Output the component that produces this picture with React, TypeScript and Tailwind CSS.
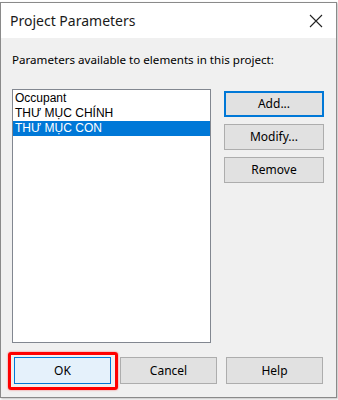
export default function App() {
  const items = ["Occupant", "THƯ MỤC CHÍNH", "THƯ MỤC CON"];
  const selected = 2;

  return (
    <div className="w-[338px] h-[400px] bg-white pt-[2px]" style={{ fontFamily: '"Noto Sans", "Open Sans", sans-serif' }}>
      <div className="w-[337px] h-[396px] border border-[#8a8a8a] flex flex-col bg-[#f0f0f0] shadow-[1px_1px_2px_rgba(0,0,0,0.25)]">
        {/* title bar */}
        <div className="h-[35px] bg-white flex items-center justify-between pl-[9px] pr-[13px]">
          <span className="text-[14px] text-[#1a1a1a] leading-none">Project Parameters</span>
          <svg width="14" height="14" viewBox="0 0 14 14" className="text-[#222]">
            <path d="M1 1 L13 13 M13 1 L1 13" stroke="currentColor" strokeWidth="1.1" fill="none" />
          </svg>
        </div>

        <div className="flex-1 px-[11px] text-[12px] text-black">
          <div className="pt-[14px] leading-[16px] text-[11.6px]">Parameters available to elements in this project:</div>

          <div className="flex mt-[21px]">
            <div
              className="w-[199px] h-[254px] bg-white border border-[#828790] pt-[1px]"
              style={{ fontFamily: '"Liberation Sans", Arial, sans-serif' }}
            >
              {items.map((it, i) => (
                <div
                  key={it}
                  className={
                    i === selected
                      ? "h-[15px] leading-[15px] pl-[2px] bg-[#0078d7] text-white"
                      : "h-[15px] leading-[15px] pl-[2px] text-black"
                  }
                >
                  {it}
                </div>
              ))}
            </div>

            <div className="ml-[13px] pt-[2px] w-[100px] flex flex-col gap-[7px]">
              <button className="h-[26px] bg-[#e1e1e1] border-2 border-[#0078d7] text-[12px]">Add...</button>
              <button className="h-[26px] bg-[#e1e1e1] border border-[#adadad] text-[12px]">Modify...</button>
              <button className="h-[26px] bg-[#e1e1e1] border border-[#adadad] text-[12px]">Remove</button>
            </div>
          </div>

          <div className="flex gap-[9px] mt-[14px] pl-[2px]">
            <span className="relative">
              <button className="w-[97px] h-[27px] bg-[#e5f1fb] border border-[#0078d7] text-[12px]">OK</button>
              <span className="absolute -left-[6px] -top-[5px] -right-[7px] -bottom-[6px] border-[3px] border-[#ff0000] rounded-[3px] shadow-[0_0_2px_rgba(255,0,0,0.6)]" />
            </span>
            <button className="w-[97px] h-[27px] bg-[#e1e1e1] border border-[#adadad] text-[12px]">Cancel</button>
            <button className="w-[97px] h-[27px] bg-[#e1e1e1] border border-[#adadad] text-[12px]">Help</button>
          </div>
        </div>
      </div>
    </div>
  );
}
